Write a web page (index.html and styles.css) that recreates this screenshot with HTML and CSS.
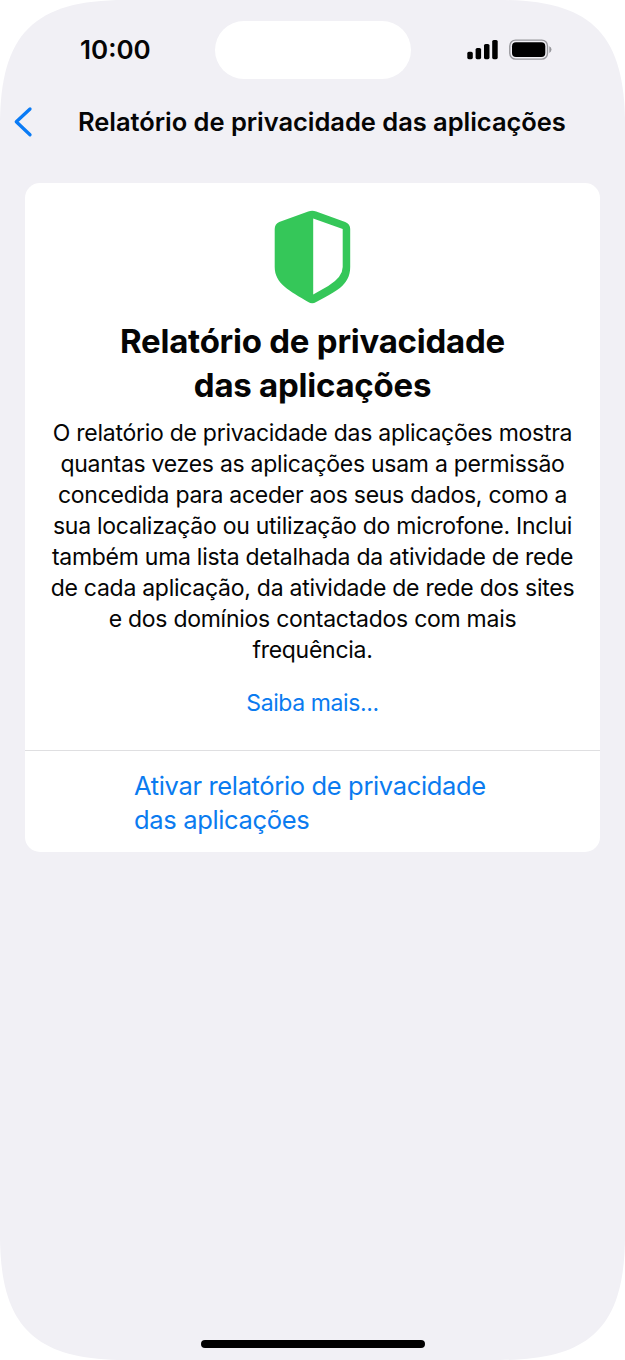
FILE: index.html
```html
<!DOCTYPE html>
<html lang="pt">
<head>
<meta charset="utf-8">
<title>Relatório de privacidade das aplicações</title>
<link rel="stylesheet" href="styles.css">
</head>
<body>
<div class="phone">
  <div class="status">
    <span class="time">10:00</span>
    <div class="island"></div>
    <svg class="indicators" width="86" height="22" viewBox="0 0 86 22">
      <rect x="0.3" y="12.8" width="5.5" height="7.4" rx="1.6"/>
      <rect x="8.6" y="9" width="5.5" height="11.2" rx="1.6"/>
      <rect x="17" y="5" width="5.5" height="15.2" rx="1.6"/>
      <rect x="25.2" y="1" width="5.5" height="19.2" rx="1.6"/>
      <rect x="42.8" y="1.1" width="37.7" height="19" rx="5.8" fill="none" stroke="#97979c" stroke-width="1.4"/>
      <rect x="45" y="3.2" width="33.3" height="14.8" rx="4"/>
      <path d="M82.3 7.3q2.2 1 2.2 3.3t-2.2 3.3z" fill="#97979c"/>
    </svg>
  </div>
  <div class="nav">
    <svg class="back" width="20" height="32" viewBox="0 0 20 32"><path d="M17 3 3.3 15.8 17 28.8" fill="none" stroke="#0a7bf5" stroke-width="3.3" stroke-linecap="round" stroke-linejoin="round"/></svg>
    <h1 class="title">Relatório de privacidade das aplicações</h1>
  </div>
  <div class="card">
    <div class="intro">
      <svg class="shield" width="77" height="94" viewBox="-0.2 0 77 94">
        <path fill="#35c759" fill-rule="evenodd" d="M34 1.5Q38 0 42 1.5L71 12Q76 14 76 19V57C76 76 60 82 42 92Q38 94.5 34 92C16 81 .5 74 .5 57V19Q.5 14 5 12ZM39 8.5V84.5L54 76Q68.5 67 68.5 57V19Z"/>
      </svg>
      <h2 class="heading"><span>Relatório de privacidade</span><br><span>das aplicações</span></h2>
      <p class="body">O relatório de privacidade das aplicações mostra<br>quantas vezes as aplicações usam a permissão<br>concedida para aceder aos seus dados, como a<br>sua localização ou utilização do microfone. Inclui<br>também uma lista detalhada da atividade de rede<br>de cada aplicação, da atividade de rede dos sites<br>e dos domínios contactados com mais<br>frequência.</p>
      <a class="more">Saiba mais...</a>
    </div>
    <a class="action">Ativar relatório de privacidade<br>das aplicações</a>
  </div>
  <div class="home"></div>
</div>
</body>
</html>
```
FILE: styles.css
```css
* { box-sizing: border-box; }
body { margin: 0; background: #fff; font-family: Inter, "Liberation Sans", sans-serif; color: #050505; }
.phone {
  width: 625px; height: 1360px; background: #f1f0f5; display: flex; flex-direction: column; align-items: center;
  clip-path: path("M0 125C0 34 34 0 125 0H500C591 0 625 34 625 125V1235C625 1326 591 1360 500 1360H125C34 1360 0 1326 0 1235Z");
}
.status { width: 100%; height: 100px; display: grid; grid-template-columns: 214.5px 196px 214.5px; align-items: center; }
.time { padding-left: 80px; font-size: 26px; line-height: 30px; font-weight: 600; }
.island { height: 58px; border-radius: 29px; background: #fff; }
.indicators { margin-left: 56px; }
.nav { width: 100%; height: 44px; display: flex; align-items: center; padding-left: 13px; }
.back { flex: none; }
.title { margin: 0 0 0 45px; font-size: 25.5px; font-weight: 600; line-height: 32px; letter-spacing: -.04px; white-space: nowrap; }
.card { width: 575px; height: 669px; margin-top: 39px; background: #fff; border-radius: 15px; }
.intro { height: 568px; padding-top: 27px; display: flex; flex-direction: column; align-items: center; text-align: center; border-bottom: 1px solid #dfdfe1; white-space: nowrap; }
.shield { flex: none; }
.heading { margin: 15px 0 0; font-size: 33px; line-height: 44px; font-weight: 700; letter-spacing: -.25px; }
.body { margin: 11px 0 0; font-size: 23px; line-height: 31px; letter-spacing: -.27px; }
.more { margin-top: 22px; font-size: 23px; line-height: 31px; letter-spacing: -.4px; color: #0a7bf0; }
.action { display: block; margin: 18px 0 0 109px; font-size: 25.5px; line-height: 34px; letter-spacing: -.35px; color: #0a7bf0; white-space: nowrap; }
.home { width: 224px; height: 8px; border-radius: 4px; background: #000; margin-top: auto; margin-bottom: 12px; }
```
